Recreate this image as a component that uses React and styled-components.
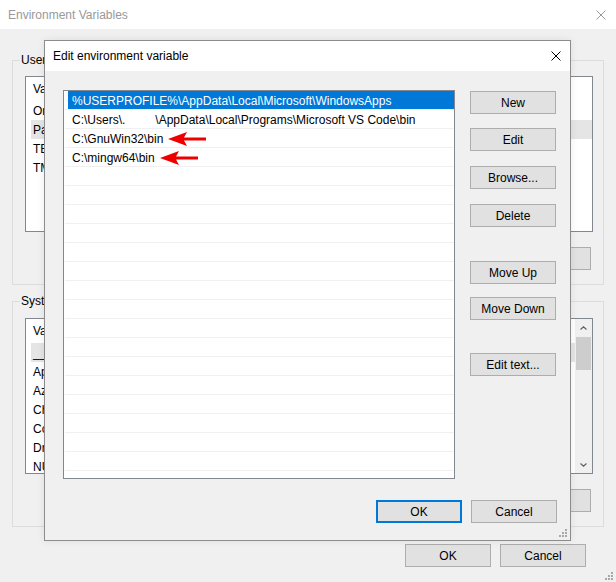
import styled, { createGlobalStyle } from "styled-components";

// Environment Variables window with the "Edit environment variable" dialog on top of it

const GlobalStyle = createGlobalStyle`
  html, body { margin: 0; padding: 0; }
  body {
    font-family: "Liberation Sans", Arial, sans-serif;
    font-size: 12px;
    color: #000;
    background: #f0f0f0;
  }
  * { box-sizing: border-box; }
`;

// only the first letters of these peek out from behind the dialog
const USER_VARS = [
  { name: "OneDrive" },
  { name: "Path", selected: true },
  { name: "TEMP" },
  { name: "TMP" },
];

const SYSTEM_VARS = [
  { name: "__PSLockdownPolicy", selected: true },
  { name: "ApiKeyPath" },
  { name: "AzureCLI" },
  { name: "ChocolateyInstall" },
  { name: "ComSpec" },
  { name: "DriverData" },
  { name: "NUMBER_OF_PROCESSORS" },
];

const PATHS = [
  { text: "%USERPROFILE%\\AppData\\Local\\Microsoft\\WindowsApps", selected: true },
  { text: "C:\\Users\\.", rest: "\\AppData\\Local\\Programs\\Microsoft VS Code\\bin" },
  { text: "C:\\GnuWin32\\bin", marked: true },
  { text: "C:\\mingw64\\bin", marked: true },
];

const EMPTY_ROWS = 17;

const CloseIcon = ({ color }) => (
  <svg width="10" height="10" viewBox="0 0 10 10">
    <path d="M0.5 0.5 L9.5 9.5 M9.5 0.5 L0.5 9.5" stroke={color} strokeWidth="1" fill="none" />
  </svg>
);

const RedArrow = () => (
  <svg width="38" height="16" viewBox="0 0 38 16">
    <path d="M0 8 L19 1 L16 6.5 L38 6.5 L38 9.5 L16 9.5 L19 15 Z" fill="#ee0000" />
  </svg>
);

const Chevron = ({ up }) => (
  <svg width="7" height="4" viewBox="0 0 7 4">
    <path d={up ? "M0.5 3.5 L3.5 0.8 L6.5 3.5" : "M0.5 0.5 L3.5 3.2 L6.5 0.5"} stroke="#606060" strokeWidth="1.2" fill="none" />
  </svg>
);

const Grip = () => (
  <svg width="8" height="8" viewBox="0 0 8 8">
    <rect x="6" y="0" width="2" height="2" fill="#a8a8a8" />
    <rect x="3" y="3" width="2" height="2" fill="#a8a8a8" />
    <rect x="6" y="3" width="2" height="2" fill="#a8a8a8" />
    <rect x="0" y="6" width="2" height="2" fill="#a8a8a8" />
    <rect x="3" y="6" width="2" height="2" fill="#a8a8a8" />
    <rect x="6" y="6" width="2" height="2" fill="#a8a8a8" />
  </svg>
);

const VarList = ({ items, scroll }) => (
  <ListView>
    <ListContent>
      <ListHeader>Variable</ListHeader>
      {items.map((v) => (
        <VarRow key={v.name} $selected={v.selected}>
          {v.name}
        </VarRow>
      ))}
    </ListContent>
    {scroll && (
      <Scrollbar>
        <ScrollArrow>
          <Chevron up />
        </ScrollArrow>
        <Thumb />
        <ScrollTrack />
        <ScrollArrow>
          <Chevron />
        </ScrollArrow>
      </Scrollbar>
    )}
  </ListView>
);

const App = () => {
  return (
    <Page>
      <GlobalStyle />
      <WinTitle>
        <span>Environment Variables</span>
        <CloseIcon color="#999999" />
      </WinTitle>

      <WinBody>
        <Group $top={9}>
          <Legend>User</Legend>
          <VarList items={USER_VARS} />
          <ButtonRow>
            <Button>Delete</Button>
          </ButtonRow>
        </Group>

        <Group $top={10} $gap={9}>
          <Legend>System</Legend>
          <VarList items={SYSTEM_VARS} scroll />
          <ButtonRow>
            <Button>Delete</Button>
          </ButtonRow>
        </Group>

        <FooterRow>
          <Button>OK</Button>
          <Button>Cancel</Button>
        </FooterRow>
      </WinBody>
      <CornerGrip>
        <Grip />
      </CornerGrip>

      {/* modal dialog on top */}
      <Dialog>
        <DlgTitle>
          <span>Edit environment variable</span>
          <CloseIcon color="#000000" />
        </DlgTitle>
        <DlgBody>
          <DlgMain>
            <PathList>
              {PATHS.map((p) => (
                <PathRow key={p.text}>
                  <PathCell $selected={p.selected}>
                    {p.text}
                    {p.rest && (
                      <>
                        <Redacted />
                        {p.rest}
                      </>
                    )}
                    {p.marked && (
                      <ArrowMark>
                        <RedArrow />
                      </ArrowMark>
                    )}
                  </PathCell>
                </PathRow>
              ))}
              {Array.from({ length: EMPTY_ROWS }).map((_, i) => (
                <PathRow key={i}>
                  <PathCell />
                </PathRow>
              ))}
            </PathList>
            <SideButtons>
              <Button>New</Button>
              <Button $mt={14}>Edit</Button>
              <Button $mt={15}>Browse...</Button>
              <Button $mt={15}>Delete</Button>
              <Button $mt={34}>Move Up</Button>
              <Button $mt={13}>Move Down</Button>
              <Button $mt={33}>Edit text...</Button>
            </SideButtons>
          </DlgMain>
          <DlgFooter>
            <Button $default>OK</Button>
            <Button>Cancel</Button>
          </DlgFooter>
        </DlgBody>
        <DlgGrip>
          <Grip />
        </DlgGrip>
      </Dialog>
    </Page>
  );
};
export default App;

const Page = styled.div`
  position: relative;
  width: 616px;
  height: 582px;
  overflow: hidden;
  display: flex;
  flex-direction: column;
  background: #f0f0f0;
`;

const WinTitle = styled.div`
  height: 29px;
  flex-shrink: 0;
  display: flex;
  align-items: center;
  justify-content: space-between;
  padding: 0 10px 0 8px;
  background: #ffffff;
  color: #999999;
`;

const WinBody = styled.div`
  display: flex;
  flex-direction: column;
  padding: 24px 12px 0 12px;
`;

const Group = styled.fieldset`
  margin: ${(p) => p.$gap || 0}px 0 0 0;
  padding: ${(p) => p.$top}px 10px 14px 12px;
  border: 1px solid #dcdcdc;
  min-width: 0;
`;

const Legend = styled.legend`
  margin-left: -5px;
  padding: 0 1px;
  line-height: 14px;
  white-space: nowrap;
`;

const ListView = styled.div`
  height: 156px;
  display: flex;
  border: 1px solid #828790;
  background: #ffffff;
  overflow: hidden;
`;

const ListContent = styled.div`
  flex: 1;
  min-width: 0;
`;

const ListHeader = styled.div`
  height: 24px;
  display: flex;
  align-items: center;
  padding-left: 7px;
`;

const VarRow = styled.div`
  height: 19px;
  display: flex;
  align-items: center;
  margin-left: 5px;
  padding-left: 2px;
  white-space: nowrap;
  background: ${(p) => (p.$selected ? "#e5e5e5" : "transparent")};
`;

const Scrollbar = styled.div`
  width: 17px;
  flex-shrink: 0;
  display: flex;
  flex-direction: column;
  background: #f0f0f0;
`;

const ScrollArrow = styled.div`
  height: 17px;
  display: flex;
  align-items: center;
  justify-content: center;
`;

const Thumb = styled.div`
  height: 33px;
  margin: 1px 1px 0 1px;
  background: #cdcdcd;
`;

const ScrollTrack = styled.div`
  flex: 1;
`;

const ButtonRow = styled.div`
  display: flex;
  justify-content: flex-end;
  gap: 9px;
  margin-top: 15px;
  padding-right: 2px;
`;

const FooterRow = styled.div`
  display: flex;
  justify-content: flex-end;
  gap: 9px;
  margin-top: 17px;
  padding-right: 18px;
`;

const Button = styled.div`
  width: 86px;
  height: 23px;
  flex-shrink: 0;
  margin-top: ${(p) => p.$mt || 0}px;
  display: flex;
  align-items: center;
  justify-content: center;
  background: #e1e1e1;
  border: ${(p) => (p.$default ? "2px solid #0078d7" : "1px solid #adadad")};
  color: #000;
  white-space: nowrap;
`;

const CornerGrip = styled.div`
  position: absolute;
  right: 3px;
  bottom: 2px;
  line-height: 0;
`;

const Dialog = styled.div`
  position: absolute;
  left: 44px;
  top: 40px;
  width: 527px;
  height: 501px;
  display: flex;
  flex-direction: column;
  border: 1px solid #8c8c8c;
  background: #f0f0f0;
  box-shadow: 0 0 8px rgba(0, 0, 0, 0.08);
`;

const DlgTitle = styled.div`
  height: 30px;
  flex-shrink: 0;
  display: flex;
  align-items: center;
  justify-content: space-between;
  padding: 0 9px 0 8px;
  background: #ffffff;
`;

const DlgBody = styled.div`
  flex: 1;
  display: flex;
  flex-direction: column;
  padding: 19px 13px 0 18px;
`;

const DlgMain = styled.div`
  display: flex;
  gap: 15px;
  height: 389px;
`;

const PathList = styled.div`
  width: 392px;
  height: 389px;
  padding: 0 0 0 1px;
  border: 1px solid #828790;
  background: #ffffff;
  overflow: hidden;
`;

const PathRow = styled.div`
  height: 19px;
  padding-left: 3px;
  border-bottom: 1px solid #f0f0f0;
`;

const PathCell = styled.div`
  height: 18px;
  display: flex;
  align-items: center;
  padding-left: 4px;
  padding-top: 1px;
  white-space: nowrap;
  background: ${(p) => (p.$selected ? "#0078d7" : "transparent")};
  color: ${(p) => (p.$selected ? "#ffffff" : "#000000")};
`;

const Redacted = styled.span`
  display: inline-block;
  width: 30px;
`;

const ArrowMark = styled.span`
  display: inline-flex;
  margin-left: 5px;
`;

const SideButtons = styled.div`
  display: flex;
  flex-direction: column;
  padding-top: 1px;
`;

const DlgFooter = styled.div`
  display: flex;
  justify-content: flex-end;
  gap: 9px;
  margin-top: 21px;
`;

const DlgGrip = styled.div`
  position: absolute;
  right: 3px;
  bottom: 3px;
  line-height: 0;
`;
